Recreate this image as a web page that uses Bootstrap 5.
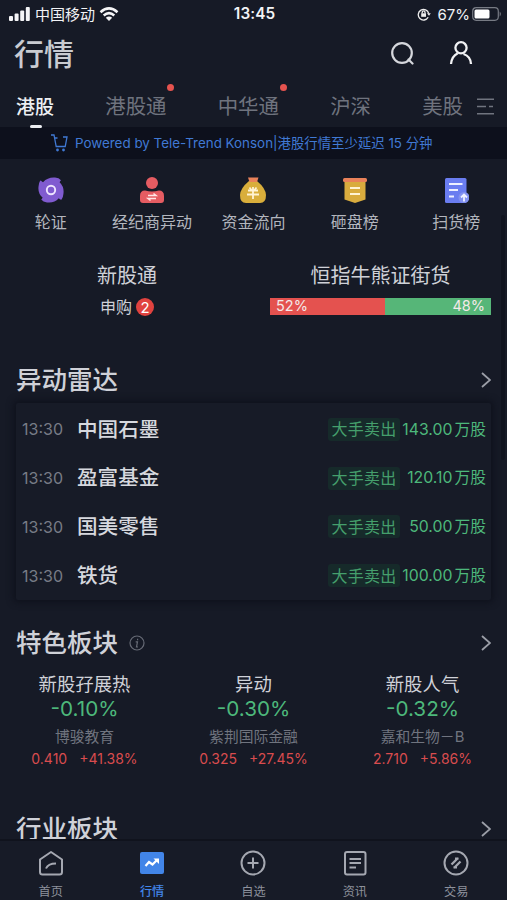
<!DOCTYPE html>
<html lang="zh-CN">
<head>
<meta charset="utf-8">
<meta name="viewport" content="width=device-width, initial-scale=1">
<title>行情</title>
<link href="https://cdn.jsdelivr.net/npm/bootstrap@5.3.0/dist/css/bootstrap.min.css" rel="stylesheet">
<style>
html,body{height:900px;overflow:hidden}
body{background:#161a26;color:#cfd1d8;font-family:Inter,"Noto Sans CJK SC",sans-serif;font-size:16px;line-height:1;width:507px}
svg{display:block;flex:none}
.nw{white-space:nowrap}
.app{height:900px}
.content{flex:1 1 0;min-height:0}
.status{height:28px;padding:0 5px 0 9px;color:#f2f3f6;font-size:15px}
.status .clock{font-weight:600;font-size:15.3px;letter-spacing:.1px;padding-right:2px}
.status .side{flex:1 1 0}
.status .lock{margin-right:6px}
.status .batt{margin-left:2px}
.titlebar{height:50px;padding:2px 34px 0 14px}
.titlebar h1{font-size:30px;font-weight:500;line-height:1;color:#c9cbd1}
.titlebar svg{margin-top:-2px}
.titlebar .person{margin-left:35px}
.tabs{height:49px;padding:10px 13px 0 16px;font-size:20.4px;color:#6f737e}
.tabs .on{color:#eceef2;font-size:19px;font-weight:500}
.tabs .on::after{content:"";position:absolute;left:14px;top:27px;width:12px;height:3px;border-radius:2px;background:#eceef2}
.tabs .more{margin-left:14px;margin-top:-2px}
.dot{position:absolute;right:-8px;top:-13px;width:7px;height:7px;border-radius:50%;background:#e5534f}
.notice{height:32px;background:#0d101c;color:#4079d4;font-size:13.4px;padding-left:51px;gap:7px}
.notice span{padding-top:1px}
.quick{height:81px;padding-top:18px;font-size:16px;color:#b3b6be}
.quick .item{width:20%;gap:11px}
.duo{height:102px;padding:26px 16px 0 0}
.duo .h{font-size:20px}
.ipo{width:254px}
.ipo .apply{margin-top:12px}
.cnt{width:18px;height:18px;background:#e0423f;color:#fff;font-size:15px}
.bull{width:221px}
.split{height:17px;margin-top:12px;font-size:14.5px;color:#f3e9e9}
.split .sell{background:#e4524f;padding-left:6px}
.split .buy{background:#56b678;padding-right:6px}
.sect{height:38px;padding:0 16px}
.sect h2{font-size:25.5px;font-weight:500;line-height:1}
.sect-a{margin-top:19px;margin-bottom:4px}
.sect-b{margin-top:24px}
.sect-c{margin-top:12px}
.sect .info{margin-left:11px}
.radar{height:197px;margin:0 16px;box-shadow:0 0 7px 2px #0e111b;background:#171b27;padding:1px 5px 0 6px;font-size:16px;border-radius:2px}
.radar .line{height:48.8px;padding-top:2px}
.time{color:#777b86;width:55px;font-size:16px}
.name{font-size:20.6px;font-weight:500;color:#d6d8de;padding-top:1px}
.tag{background:#162a2a;color:#459f6c;border-radius:3px;height:23px;width:72px;font-size:16px;letter-spacing:.2px}
.vol{color:#4db87b;width:86px;font-size:15.8px}
.vol .u{margin-left:2px}
.blocks{height:136px;padding-top:13px}
.blocks .blk{width:169px}
.blk .n{font-size:18.4px;height:24px}
.blk .p{font-size:20.7px;height:31px;color:#4db87b}
.blk .s{font-size:14.8px;height:22px;color:#70747f}
.blk .v{font-size:14px;height:20px;color:#d94c4e;gap:12px}
.tabbar{height:61px;border-top:2px solid #10131d;background:#171b27;color:#8d919c;font-size:12.2px;padding-top:9px}
.tabbar .item{width:20%;gap:10px}
.tabbar .on{color:#4386ea;font-weight:500}
.thumb{position:absolute;left:501px;top:215px;width:4px;height:245px;border-radius:2px;background:#10131e}
</style>
<script src="https://cdn.jsdelivr.net/npm/bootstrap@5.3.0/dist/js/bootstrap.bundle.min.js"></script>
</head>
<body>
<div class="app d-flex flex-column overflow-hidden position-relative">
 <div class="content overflow-hidden">
  <div class="status d-flex align-items-center nw">
    <div class="side d-flex align-items-center">
      <svg width="22" height="14" viewBox="0 0 22 14" fill="#f5f5f7"><rect x="0" y="9" width="4" height="5" rx="1"/><rect x="5.6" y="6.5" width="4" height="7.5" rx="1"/><rect x="11.2" y="3.5" width="4" height="10.5" rx="1"/><rect x="16.8" y="0" width="4" height="14" rx="1"/></svg>
      <span class="ms-1">中国移动</span>
      <svg class="ms-1" width="20" height="14" viewBox="0 0 20 14" fill="none" stroke="#f5f5f7" stroke-width="2.5"><path d="M1.5 5.2Q10-2.4 18.500 5.200M4.700 8.500Q10 3.800 15.300 8.500"/><path d="M10 14L6.800 10.800Q10 8 13.200 10.800Z" fill="#f5f5f7" stroke="none"/></svg>
    </div>
    <span class="clock">13:45</span>
    <div class="side d-flex align-items-center justify-content-end">
      <svg class="lock" width="14" height="14" viewBox="0 0 14 14" fill="none" stroke="#eee" stroke-width="1.3"><path d="M11.200 10.300A5.300 5.300 0 1 1 11.700 6.500"/><path d="M10 6.200h3.800L12 8.800Z" fill="#eee" stroke="none"/><rect x="4.200" y="6.300" width="4.800" height="3.500" fill="#eee" stroke="none"/><path d="M5.200 6.500V5.300a1.400 1.400 0 0 1 2.800 0v1.200"/></svg>
      <span>67%</span>
      <svg class="batt" width="30" height="14" viewBox="0 0 30 14"><rect x=".7" y=".7" width="25.600" height="12.600" rx="3.500" fill="none" stroke="#777b84" stroke-width="1.200"/><rect x="2.500" y="2.500" width="15" height="9" rx="1.500" fill="#fff"/><path d="M27.700 4.500q2.400 2.500 0 5Z" fill="#777b84"/></svg>
    </div>
  </div>

  <header class="titlebar d-flex align-items-center">
    <h1 class="m-0 me-auto nw">行情</h1>
    <svg width="24" height="24" viewBox="0 0 24 24" fill="none" stroke="#d5d7dc" stroke-width="2.200"><circle cx="12" cy="12" r="9.800"/><path d="M18.500 18.500L22.500 22.500" stroke-linecap="round"/></svg>
    <svg class="person" width="24" height="24" viewBox="0 0 24 24" fill="none" stroke="#f1f2f4" stroke-width="2.300"><circle cx="12" cy="6.800" r="5.600"/><path d="M2 23C2.500 17 5.500 13.800 8.800 12.200M14.500 13C19 14.500 21.800 18.500 22 23"/></svg>
  </header>

  <nav class="tabs d-flex justify-content-between align-items-center nw">
    <span class="on position-relative">港股</span>
    <span class="position-relative">港股通<i class="dot"></i></span>
    <span class="position-relative">中华通<i class="dot"></i></span>
    <span>沪深</span>
    <span class="d-flex align-items-center">美股<svg class="more" width="17" height="17" viewBox="0 0 17 17" stroke="#70747f" stroke-width="1.500"><path d="M0 1.200H17M0 8.500H9M12 8.500H16M0 15.800H17"/></svg></span>
  </nav>

  <div class="notice d-flex align-items-center nw">
    <svg width="17" height="18" viewBox="0 0 17 18" fill="none" stroke="#4079d4" stroke-width="1.300"><path d="M0 1H3L5.200 12.500H14.200L16 3H12M3.600 4H6.500"/><circle cx="6.500" cy="16" r="1.400" fill="#4079d4" stroke="none"/><circle cx="12.500" cy="16" r="1.400" fill="#4079d4" stroke="none"/></svg>
    <span>Powered by Tele-Trend Konson|港股行情至少延迟 15 分钟</span>
  </div>

  <div class="quick d-flex nw">
    <div class="item d-flex flex-column align-items-center">
      <svg width="26" height="26" viewBox="0 0 26 26"><path d="M2 4Q2.800 3 3.600 4.200L5 5.200Q10 0 17 .6Q21 1 23 3.200Q22 4 21.600 5.200Q26.500 10 25.400 17Q25 21 23.600 22.600Q22 23 20.800 21.200Q16 26.500 9 25.400Q5 25 3.200 22.600Q4 22 4.600 20.600Q-.5 16 .6 9Q1 5.500 2 4Z" fill="#805bd0"/><circle cx="13" cy="13" r="4.200" fill="none" stroke="#eee5ff" stroke-width="1.900"/></svg>
      <span>轮证</span>
    </div>
    <div class="item d-flex flex-column align-items-center">
      <svg width="26" height="26" viewBox="0 0 26 26" fill="#e55c62"><circle cx="13" cy="6" r="6"/><path d="M1 23V19Q1 13.500 6 13.500Q13 15.500 20 13.500Q25 13.500 25 19V23Q25 26 22 26H4Q1 26 1 23Z"/><path d="M9 18.500H17L14.500 16.500M17 21.500H9L11.500 23.500" fill="none" stroke="#ffe5e5" stroke-width="1.500"/></svg>
      <span>经纪商异动</span>
    </div>
    <div class="item d-flex flex-column align-items-center">
      <svg width="26" height="26" viewBox="0 0 26 26"><path d="M9 4H17Q25.500 11 26 18Q26 26 20 26H6Q0 26 0 18Q.5 11 9 4Z" fill="#d9ae3b"/><path d="M8 0.500H18.500L17 5H9.500Z" fill="#e9825a"/><path d="M8 13.500H18M7 17.500H19M13 10V22M9.500 10.500L11.500 13M16.500 10.500L14.500 13" stroke="#fff3d4" stroke-width="1.800"/></svg>
      <span>资金流向</span>
    </div>
    <div class="item d-flex flex-column align-items-center">
      <svg width="26" height="26" viewBox="0 0 26 26"><path d="M2.500 3H23.500V22.500L13 26L2.500 22.500Z" fill="#d9ac3e"/><rect x="1" y="1" width="24" height="4" rx="1.500" fill="#e9825a"/><path d="M8 11H18M8 17H18" stroke="#fff3d4" stroke-width="2"/></svg>
      <span>砸盘榜</span>
    </div>
    <div class="item d-flex flex-column align-items-center">
      <svg width="26" height="26" viewBox="0 0 26 26"><rect x="2" y="1" width="21.500" height="25" rx="1.500" fill="#6a7df0"/><path d="M6 7H19.500M6 13H15M6 19.500H11" stroke="#edf0ff" stroke-width="1.800"/><circle cx="21" cy="20.500" r="5.500" fill="#8291f0"/><path d="M21 24.500V18M18 20.500L21 17.500L24 20.500" fill="none" stroke="#edf0ff" stroke-width="1.800"/></svg>
      <span>扫货榜</span>
    </div>
  </div>

  <div class="duo d-flex justify-content-between nw">
    <div class="ipo d-flex flex-column align-items-center">
      <div class="h">新股通</div>
      <div class="apply d-flex align-items-center gap-1"><span>申购</span><span class="cnt rounded-circle d-flex align-items-center justify-content-center">2</span></div>
    </div>
    <div class="bull">
      <div class="h text-center">恒指牛熊证街货</div>
      <div class="split d-flex">
        <div class="sell d-flex align-items-center" style="width:52%">52%</div>
        <div class="buy d-flex align-items-center justify-content-end" style="width:48%">48%</div>
      </div>
    </div>
  </div>

  <div class="sect sect-a d-flex align-items-center justify-content-between nw"><h2 class="m-0">异动雷达</h2><svg width="10" height="16" viewBox="0 0 10 16" fill="none" stroke="#9b9ea7" stroke-width="1.800"><path d="M1 1L9 8L1 15"/></svg></div>

  <div class="radar nw">
    <div class="line d-flex align-items-center"><span class="time">13:30</span><span class="name me-auto">中国石墨</span><span class="tag d-flex align-items-center justify-content-center">大手卖出</span><span class="vol text-end">143.00<span class="u">万股</span></span></div>
    <div class="line d-flex align-items-center"><span class="time">13:30</span><span class="name me-auto">盈富基金</span><span class="tag d-flex align-items-center justify-content-center">大手卖出</span><span class="vol text-end">120.10<span class="u">万股</span></span></div>
    <div class="line d-flex align-items-center"><span class="time">13:30</span><span class="name me-auto">国美零售</span><span class="tag d-flex align-items-center justify-content-center">大手卖出</span><span class="vol text-end">50.00<span class="u">万股</span></span></div>
    <div class="line d-flex align-items-center"><span class="time">13:30</span><span class="name me-auto">铁货</span><span class="tag d-flex align-items-center justify-content-center">大手卖出</span><span class="vol text-end">100.00<span class="u">万股</span></span></div>
  </div>

  <div class="sect sect-b d-flex align-items-center nw"><h2 class="m-0">特色板块</h2><svg class="info me-auto" width="16" height="16" viewBox="0 0 16 16" fill="none" stroke="#676b76" stroke-width="1.200"><circle cx="8" cy="8" r="7"/><path d="M6.700 6.800H8.500L7.500 12H9M8.600 3.800V5.200"/></svg><svg width="10" height="16" viewBox="0 0 10 16" fill="none" stroke="#9b9ea7" stroke-width="1.800"><path d="M1 1L9 8L1 15"/></svg></div>

  <div class="blocks d-flex nw">
    <div class="blk d-flex flex-column align-items-center"><div class="n">新股孖展热</div><div class="p">-0.10%</div><div class="s">博骏教育</div><div class="v d-flex"><span>0.410</span><span>+41.38%</span></div></div>
    <div class="blk d-flex flex-column align-items-center"><div class="n">异动</div><div class="p">-0.30%</div><div class="s">紫荆国际金融</div><div class="v d-flex"><span>0.325</span><span>+27.45%</span></div></div>
    <div class="blk d-flex flex-column align-items-center"><div class="n">新股人气</div><div class="p">-0.32%</div><div class="s">嘉和生物－B</div><div class="v d-flex"><span>2.710</span><span>+5.86%</span></div></div>
  </div>

  <div class="sect sect-c d-flex align-items-center justify-content-between nw"><h2 class="m-0">行业板块</h2><svg width="10" height="16" viewBox="0 0 10 16" fill="none" stroke="#9b9ea7" stroke-width="1.800"><path d="M1 1L9 8L1 15"/></svg></div>
 </div>

  <nav class="tabbar d-flex flex-shrink-0 nw">
    <div class="item d-flex flex-column align-items-center"><svg width="26" height="26" viewBox="0 0 26 26" fill="none" stroke="#a5a8b1" stroke-width="2"><path d="M2 9.500L13 2L24 9.500V22Q24 24.500 21.500 24.500H4.500Q2 24.500 2 22Z" stroke-linejoin="round"/><path d="M8 18.500Q10 13.500 18 13.500"/></svg><span>首页</span></div>
    <div class="item on d-flex flex-column align-items-center"><svg width="26" height="26" viewBox="0 0 26 26"><rect x="1" y="2" width="24" height="22" rx="2" fill="#4285e8"/><path d="M6.500 16L10 12L13.500 14.500L17.500 10.500" fill="none" stroke="#fff" stroke-width="2.200"/><path d="M14.500 8.500H20V14Z" fill="#fff"/></svg><span>行情</span></div>
    <div class="item d-flex flex-column align-items-center"><svg width="26" height="26" viewBox="0 0 26 26" fill="none" stroke="#a5a8b1" stroke-width="2"><circle cx="13" cy="13" r="11.500"/><path d="M7.500 13H18.500M13 7.500V18.500"/></svg><span>自选</span></div>
    <div class="item d-flex flex-column align-items-center"><svg width="26" height="26" viewBox="0 0 26 26" fill="none" stroke="#a5a8b1" stroke-width="2"><rect x="3" y="2" width="20.500" height="22.500" rx="2"/><path d="M7.500 9H19M7.500 13H19M7.500 17.500H14"/></svg><span>资讯</span></div>
    <div class="item d-flex flex-column align-items-center"><svg width="26" height="26" viewBox="0 0 26 26" fill="none" stroke="#a5a8b1" stroke-width="2"><circle cx="13" cy="13" r="11.500"/><path d="M8.500 14.500L15 8M12 8.700H15.500M17.500 11.500L11 18M14 17.300H10.500" stroke-width="2.300"/></svg><span>交易</span></div>
  </nav>
  <div class="thumb"></div>
</div>
</body>
</html>
